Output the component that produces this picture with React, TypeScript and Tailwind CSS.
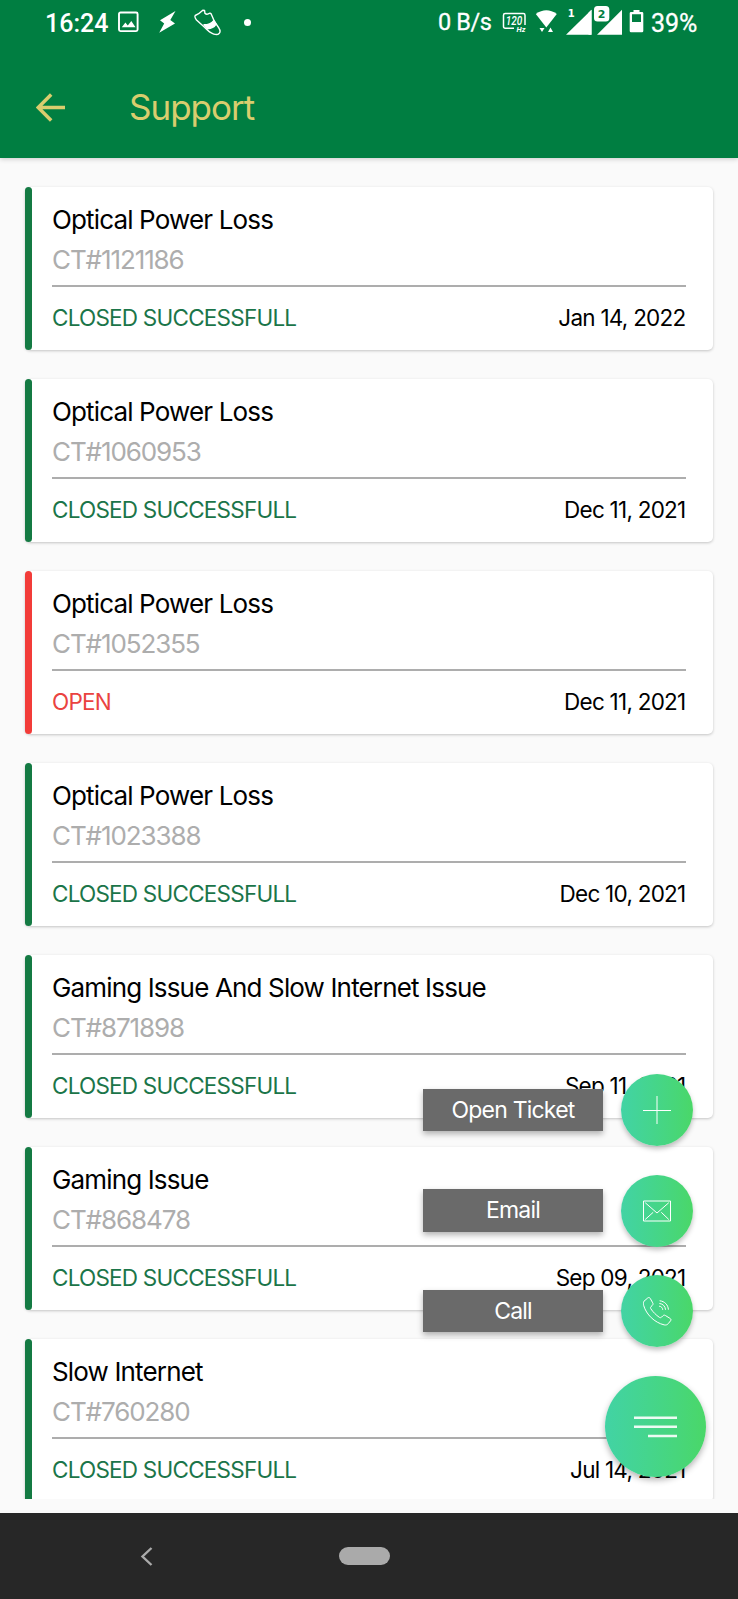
import { clsx } from "clsx";

type Ticket = {
  id: string;
  title: string;
  status: "CLOSED SUCCESSFULL" | "OPEN";
  date: string;
};

const tickets: Ticket[] = [
  { id: "1121186", title: "Optical Power Loss", status: "CLOSED SUCCESSFULL", date: "Jan 14, 2022" },
  { id: "1060953", title: "Optical Power Loss", status: "CLOSED SUCCESSFULL", date: "Dec 11, 2021" },
  { id: "1052355", title: "Optical Power Loss", status: "OPEN", date: "Dec 11, 2021" },
  { id: "1023388", title: "Optical Power Loss", status: "CLOSED SUCCESSFULL", date: "Dec 10, 2021" },
  { id: "871898", title: "Gaming Issue And Slow Internet Issue", status: "CLOSED SUCCESSFULL", date: "Sep 11, 2021" },
  { id: "868478", title: "Gaming Issue", status: "CLOSED SUCCESSFULL", date: "Sep 09, 2021" },
  { id: "760280", title: "Slow Internet", status: "CLOSED SUCCESSFULL", date: "Jul 14, 2021" },
];

function StatusBar() {
  return (
    <div className="flex h-11 items-center pt-0.5 font-[Roboto,sans-serif] text-white">
      <span className="ml-[45px] w-[72px] text-[25px] leading-none font-medium">16:24</span>
      <svg className="-mt-0.5 h-[22px] w-[22px]" viewBox="0 0 22 22" fill="none">
        <rect x="2" y="1.5" width="18.6" height="18.6" rx="1.5" stroke="white" strokeWidth="1.9" />
        <path d="M4.8 16.2l3.6-4.6 2.4 3 3.5-4.6 4.2 6.2z" fill="white" />
      </svg>
      <svg className="-mt-0.5 ml-[19px] h-[22px] w-[18px]" viewBox="0 0 18 22" fill="white">
        <path d="M17.5 0L2 9.3l4.2 3.2L1.2 21.8 17 12.6l-4.7-3.6z" />
      </svg>
      <svg className="-mt-0.5 ml-[18px] h-[27px] w-[27px]" viewBox="0 0 27 27" fill="none" stroke="white" strokeWidth="1.4" strokeLinejoin="round">
        <path d="M1.2 6.5C3.5 5.5 6.500 3.500 8.800 1.200l1.800.3.300 2.700c1.200 1.200 2 1.400 3.300.7l1.800-.8 1.200.8 3 7.100 4.600 6.800c1.300 2.100 1.500 4.600.3 5.700-1.200 1.300-3.400 1.200-5.300.6-3.100-1-6.200-3.600-9-6.600L2.500 11C1.200 9.400.6 7.600 1.200 6.500z" />
        <path d="M10 15.800c3.500 0 7.500-1.400 9.800-4.200l2.200 3.600c-1.600 2.800-5 4.500-8.600 4.600z" fill="white" />
      </svg>
      <span className="-mt-0.5 ml-[23px] h-[7px] w-[7px] rounded-full bg-white" />
      <span className="ml-[187px] w-[61px] text-[23.5px] leading-none tracking-[-0.4px] whitespace-nowrap [-webkit-text-stroke:0.3px_white]">0 B/s</span>
      <svg className="mt-[9px] ml-[3px] h-[22px] w-[25px] self-start" viewBox="0 0 25 22" fill="none">
        <path d="M12 17.2H3.2Q1.5 17.2 1.5 15.5V4.2Q1.5 2.5 3.2 2.5H21.3Q23 2.5 23 4.2V14" stroke="white" strokeWidth="1.5" />
        <text x="3.8" y="14.3" fill="white" fontSize="12.5" fontWeight="500" fontStyle="italic" textLength="16.5" lengthAdjust="spacingAndGlyphs" fontFamily="Roboto">120</text>
        <text x="14.5" y="21.4" fill="white" fontSize="7.5" fontWeight="700" fontStyle="italic" fontFamily="Roboto">Hz</text>
      </svg>
      <svg className="mt-[7px] ml-2 h-6 w-[23px] self-start" viewBox="0 0 23 24" fill="white">
        <path d="M.8 5Q11.3-2.5 21.8 5L11.3 18.5z" />
        <path d="M4.500 19h5L7 23zM13 23h5l-2.500-4.500z" />
      </svg>
      <svg className="mt-1 ml-2 h-[29px] w-[57px] self-start" viewBox="0 0 57 29">
        <path d="M0 28.700L25.500 3.700v25zM31 28.700L56 3.700v25z" fill="white" />
        <rect x="26.8" y="-1" width="17.5" height="17.5" rx="4" fill="#007e41" />
        <path d="M25.500 3.700v25h-3v-22z" fill="white" />
        <rect x="28" y="0" width="15.3" height="15.5" rx="3.5" fill="white" />
        <text x="1.8" y="11" fill="white" fontSize="10" fontWeight="700" fontFamily="DejaVu Sans">1</text>
        <text x="31.8" y="11.7" fill="#007e41" fontSize="11" fontWeight="700" fontFamily="DejaVu Sans">2</text>
      </svg>
      <svg className="mt-[7px] ml-[6px] h-6 w-[15px] self-start" viewBox="0 0 15 24">
        <path d="M4.5 1h6v2H13q1.3 0 1.3 1.3V22q0 1.3-1.3 1.3H2Q.7 23.300.7 22V4.300Q.7 3 2 3h2.500zM3 5.300V13h9V5.300z" fill="white" fillRule="evenodd" />
      </svg>
      <span className="ml-[7px] text-[25px] leading-none [-webkit-text-stroke:0.3px_white]">39%</span>
    </div>
  );
}

function Header() {
  return (
    <header className="relative z-10 h-[158px] bg-[#007e41] shadow-[0_1px_5px_rgba(0,0,0,0.2)]">
      <StatusBar />
      <div className="-mt-px flex items-start pt-[50px] text-[#d9cd6e]">
        <svg className="ml-[36px] h-[29px] w-[30px]" viewBox="0 0 30 29" fill="none" stroke="currentColor" strokeWidth="3.5">
          <path d="M29 14.5H3M15.2 1.5l-13 13 13 13" />
        </svg>
        <h1 className="-mt-1.5 ml-[63px] text-[35px] leading-10 tracking-[-1px]">Support</h1>
      </div>
    </header>
  );
}

function TicketCard({ ticket }: { ticket: Ticket }) {
  const open = ticket.status === "OPEN";
  return (
    <article className="flex h-[163px] shrink-0 rounded-[5px] bg-white shadow-[0_1px_3px_rgba(0,0,0,0.22)]">
      <div className={clsx("w-[7px] rounded-full", open ? "bg-[#f23c39]" : "bg-[#147a43]")} />
      <div className="flex-1 pt-[13px] pr-[27px] pl-5">
        <h2 className="text-[26px] leading-10 tracking-[-0.85px] text-black">{ticket.title}</h2>
        <p className="text-[26px] leading-10 tracking-[-1.1px] text-[#adadad]">CT#{ticket.id}</p>
        <div className="mt-[5px] flex items-center justify-between border-t-2 border-[#adadad] pt-4 text-[22.5px] leading-[30px]">
          <span className={clsx("tracking-[-0.77px]", open ? "text-[#ea4340]" : "text-[#1b7549]")}>{ticket.status}</span>
          <time className="mr-[0.5px] tracking-[-0.75px] text-black">{ticket.date}</time>
        </div>
      </div>
    </article>
  );
}

function PlusIcon() {
  return (
    <svg className="h-7 w-7" viewBox="0 0 28 28" stroke="white" strokeWidth="1">
      <path d="M14 0v28M0 14.5h28" />
    </svg>
  );
}

function MailIcon() {
  return (
    <svg className="h-[22px] w-7" viewBox="0 0 28 22" fill="none" stroke="white" strokeWidth="1">
      <path d="M.5 1h27v20H.5zM2.2 2.7L14 13 25.8 2.7M2.2 19.5l8-7.2M25.8 19.5l-7.5-7.2" />
    </svg>
  );
}

function CallIcon() {
  return (
    <svg className="h-[29px] w-[29px]" viewBox="0 0 29 29" fill="none" stroke="white" strokeWidth="1" strokeLinejoin="round">
      <path d="M1 4.2L4.7 1c1-.8 2-.5 2.6.5l2.4 4.3c.6 1 .3 2-.5 2.7L8 9.6c-.7.7-.6 1.5 0 2.4 2 3 5 6 8.3 8.3.9.6 1.6.5 2.3-.2l1.3-1.3c.7-.7 1.6-.9 2.5-.3l4.5 2.8c1.2.7 1.4 1.7.5 2.7l-2.2 2.7c-1 1.2-2.3 1.5-4 1.2C11.5 25.6 3.2 17.4.7 8.5.2 6.7 0 5.4 1 4.2z" />
      <path d="M16.5 9.2c1.8.2 3 1.5 3.2 3.3M16.8 6.5c3.2.4 5.4 2.7 5.7 5.9M17 3.8c4.8.5 8 4 8.4 8.5" strokeLinecap="round" />
    </svg>
  );
}

const actions = [
  { label: "Open Ticket", icon: <PlusIcon /> },
  { label: "Email", icon: <MailIcon /> },
  { label: "Call", icon: <CallIcon /> },
];

function FloatingMenu() {
  return (
    <div className="absolute top-[1074px] right-8 z-20 flex flex-col items-end">
      <div className="mr-[13px] flex flex-col gap-[28.5px]">
        {actions.map((a) => (
          <div key={a.label} className="flex items-center gap-[18px]">
            <div className="flex h-[42.5px] w-[180px] items-center justify-center bg-[#6a6a6a] text-[23px] tracking-[-0.8px] text-white shadow-[0_3px_6px_rgba(0,0,0,0.3)]">
              {a.label}
            </div>
            <button className="flex h-[72px] w-[72px] items-center justify-center rounded-full bg-linear-to-r from-[#42d3a4] to-[#4ad768] shadow-[0_3px_5px_rgba(0,0,0,0.25)]">
              {a.icon}
            </button>
          </div>
        ))}
      </div>
      <button className="mt-[29px] flex h-[101px] w-[101px] items-center justify-center rounded-full bg-linear-to-r from-[#42d3a4] to-[#4ad768] shadow-[0_3px_6px_rgba(0,0,0,0.3)]">
        <svg className="h-[22px] w-[43px]" viewBox="0 0 43 22" fill="white" fillOpacity="0.9">
          <path d="M0 .5h43v2.6H0zM0 9.5h43v2.6H0zM14 18.7h29v2.6H14z" />
        </svg>
      </button>
    </div>
  );
}

export default function App() {
  return (
    <div className="relative flex h-[1599px] w-[738px] flex-col overflow-hidden bg-[#fafafa] font-[Inter,sans-serif]">
      <Header />
      <main className="flex h-[1341px] flex-col gap-[29px] overflow-hidden px-[25px] pt-[29px]">
        {tickets.map((t) => (
          <TicketCard key={t.id} ticket={t} />
        ))}
      </main>
      <FloatingMenu />
      <nav className="mt-auto flex h-[86px] items-center bg-[#272727]">
        <svg className="ml-[140px] h-[19px] w-[13px]" viewBox="0 0 13 19" fill="none" stroke="#aaaaaa" strokeWidth="2.4">
          <path d="M11.5 1L2.5 9.5l9 8.5" />
        </svg>
        <div className="ml-[186px] h-[18.5px] w-[51px] rounded-full bg-[#aaaaaa]" />
      </nav>
    </div>
  );
}
